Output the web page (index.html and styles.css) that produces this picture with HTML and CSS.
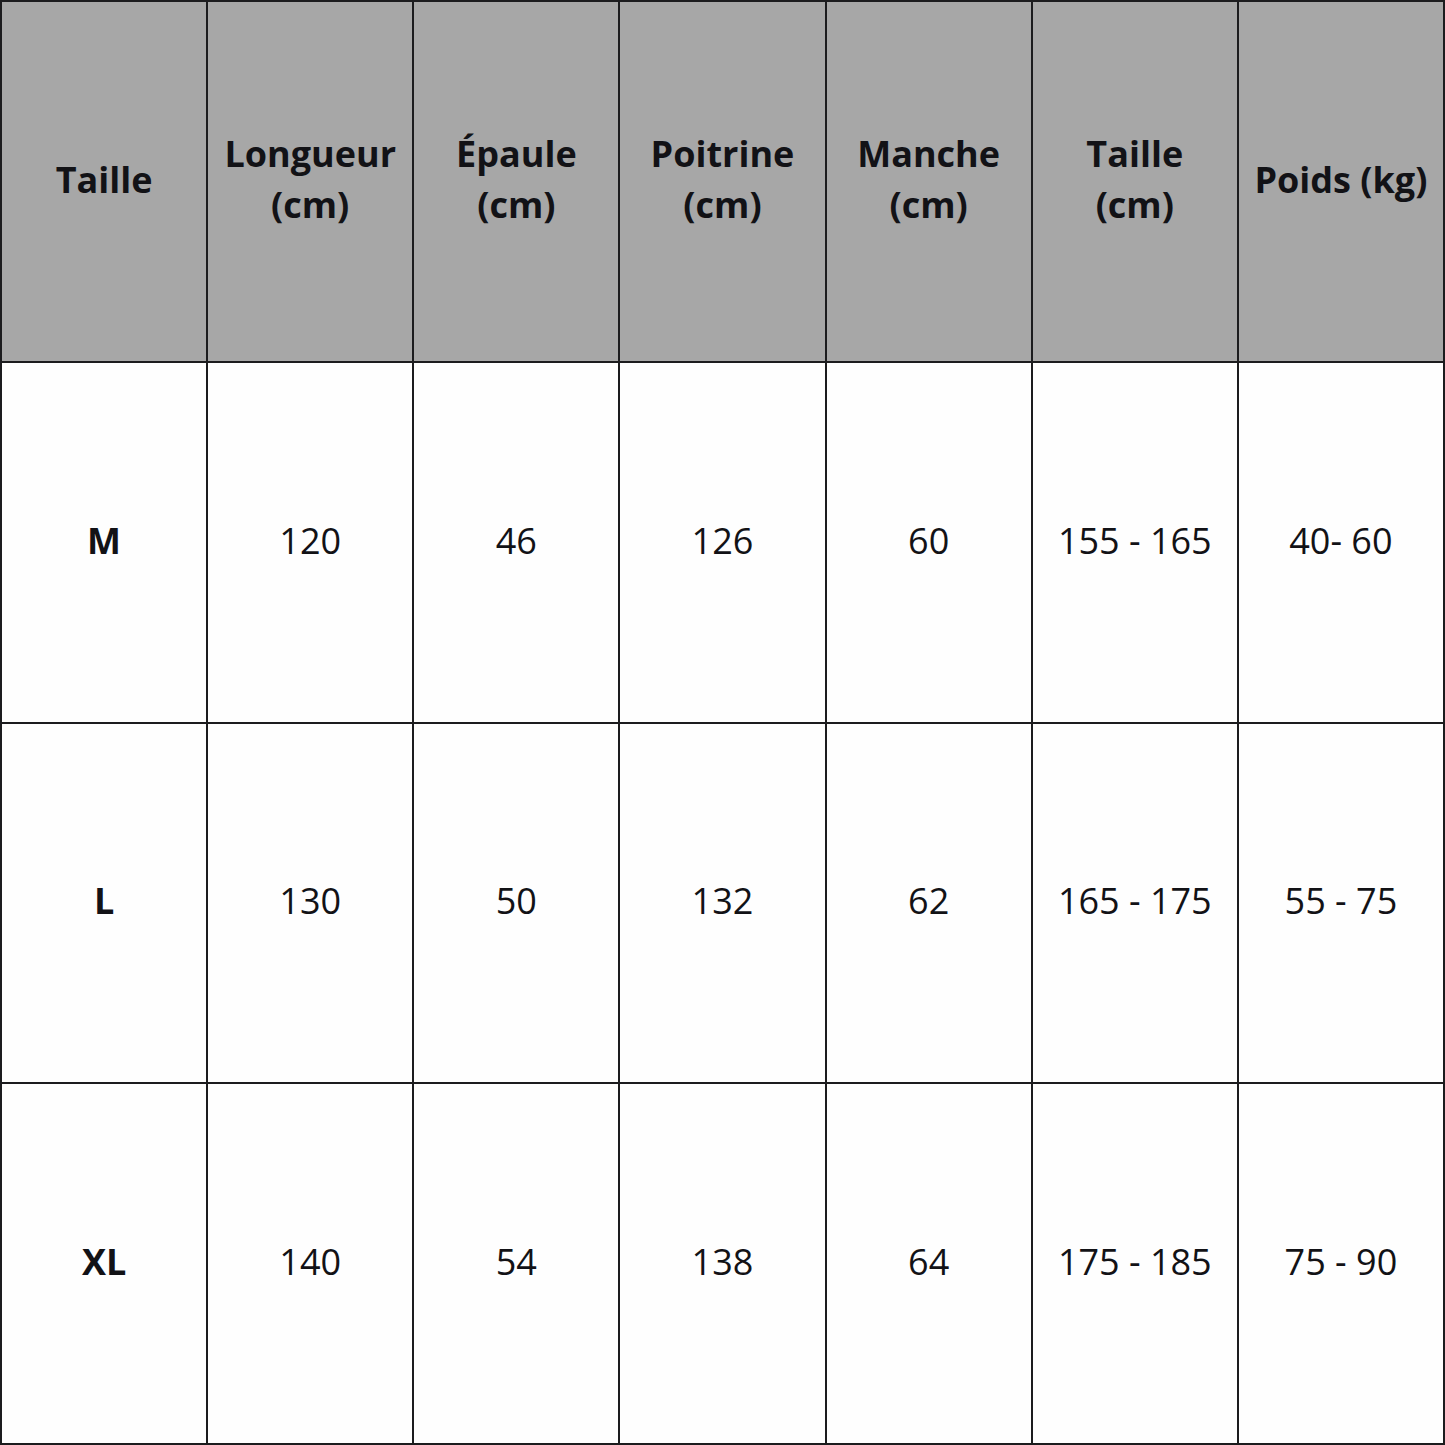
FILE: index.html
```html
<!DOCTYPE html>
<html lang="fr">
<head>
<meta charset="utf-8">
<title>Guide des tailles</title>
<link rel="stylesheet" href="styles.css">
</head>
<body>
<div class="chart">
  <div class="cell head">Taille</div>
  <div class="cell head">Longueur<br>(cm)</div>
  <div class="cell head">Épaule<br>(cm)</div>
  <div class="cell head">Poitrine<br>(cm)</div>
  <div class="cell head">Manche<br>(cm)</div>
  <div class="cell head">Taille<br>(cm)</div>
  <div class="cell head">Poids (kg)</div>

  <div class="cell size">M</div>
  <div class="cell">120</div>
  <div class="cell">46</div>
  <div class="cell">126</div>
  <div class="cell">60</div>
  <div class="cell">155 - 165</div>
  <div class="cell">40- 60</div>

  <div class="cell size">L</div>
  <div class="cell">130</div>
  <div class="cell">50</div>
  <div class="cell">132</div>
  <div class="cell">62</div>
  <div class="cell">165 - 175</div>
  <div class="cell">55 - 75</div>

  <div class="cell size">XL</div>
  <div class="cell">140</div>
  <div class="cell">54</div>
  <div class="cell">138</div>
  <div class="cell">64</div>
  <div class="cell">175 - 185</div>
  <div class="cell">75 - 90</div>
</div>
</body>
</html>
```
FILE: styles.css
```css
html, body {
  margin: 0;
  padding: 0;
  background: #ffffff;
}
.chart {
  box-sizing: border-box;
  width: 1445px;
  height: 1445px;
  display: grid;
  grid-template-columns: repeat(7, 1fr);
  grid-template-rows: repeat(4, 1fr);
  gap: 2px;
  padding: 2px;
  background: #1c1c1e;
  font-family: "Open Sans", "Liberation Sans", sans-serif;
  color: #121216;
}
.cell {
  box-sizing: border-box;
  background: #fefefe;
  display: flex;
  align-items: center;
  justify-content: center;
  text-align: center;
  font-size: 36px;
  line-height: 51px;
  padding-bottom: 4px;
}
.head {
  background: #a7a7a7;
  font-weight: 700;
}
.size {
  font-weight: 700;
}
```
